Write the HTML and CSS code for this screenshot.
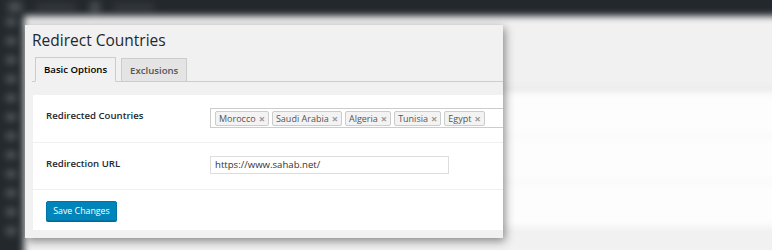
FILE: index.html
```html
<!DOCTYPE html>
<html lang="en">
<head>
  <meta charset="UTF-8" />
  <title>Redirect Countries</title>
  <link rel="stylesheet" href="styles.css">
</head>
<body>
  <div class="screen">
    <!-- blurred wp-admin behind the settings card -->
    <div class="backdrop">
      <div class="adminbar">
        <span class="ab-icon"></span>
        <span class="ab-item"></span>
        <span class="ab-icon small"></span>
        <span class="ab-item"></span>
      </div>
      <div class="wp-body">
        <div class="menu">
          <span></span><span></span><span></span><span></span><span></span>
          <span></span><span></span><span></span><span></span><span></span>
          <span></span><span></span>
        </div>
        <div class="content">
          <div class="ghost-head"></div>
          <div class="ghost-panel">
            <div class="ghost-row"></div>
            <div class="ghost-row"></div>
            <div class="ghost-row"></div>
          </div>
        </div>
      </div>
    </div>

    <div class="card">
      <h1 class="page-title">Redirect Countries</h1>
      <div class="nav-tabs">
        <a href="#" class="nav-tab active">Basic Options</a>
        <a href="#" class="nav-tab">Exclusions</a>
      </div>

      <div class="panel">
        <div class="form-row">
          <div class="label">Redirected Countries</div>
          <div class="field">
            <div class="tag-box">
              <span class="tag">Morocco <b>×</b></span>
              <span class="tag">Saudi Arabia <b>×</b></span>
              <span class="tag">Algeria <b>×</b></span>
              <span class="tag">Tunisia <b>×</b></span>
              <span class="tag">Egypt <b>×</b></span>
            </div>
          </div>
        </div>
        <div class="form-row">
          <div class="label">Redirection URL</div>
          <div class="field">
            <div class="text-input">https://www.sahab.net/</div>
          </div>
        </div>
        <div class="form-row submit-row">
          <button class="btn-primary">Save Changes</button>
        </div>
      </div>
    </div>
  </div>
</body>
</html>
```

FILE: styles.css
```css
:root {
  --dark: #23282d;
  --bg: #f1f1f1;
  --line: #dcdcdc;
  --text: #333;
  --blue: #0085ba;
}

* {
  box-sizing: border-box;
}

body {
  margin: 0;
  background: var(--bg);
  font-family: 'Open Sans', 'Noto Sans', sans-serif;
  color: var(--text);
}

.screen {
  position: relative;
  width: 772px;
  height: 250px;
  overflow: hidden;
  background: var(--bg);
}

/* background admin screen, out of focus */
.backdrop {
  position: absolute;
  top: -10px;
  left: -10px;
  right: -10px;
  bottom: -10px;
  display: flex;
  flex-direction: column;
  filter: blur(3.5px);
}

.adminbar {
  height: 26px;
  background: var(--dark);
  display: flex;
  align-items: center;
  gap: 14px;
  padding: 8px 0 0 18px;
}

.ab-icon {
  width: 14px;
  height: 10px;
  background: #4a5055;
}

.ab-icon.small {
  width: 10px;
}

.ab-item {
  width: 40px;
  height: 6px;
  background: #353b40;
}

.wp-body {
  flex: 1;
  display: flex;
}

.menu {
  width: 34px;
  background: var(--dark);
  display: flex;
  flex-direction: column;
  gap: 11px;
  padding: 2px 0 0 16px;
}

.menu span {
  width: 10px;
  height: 8px;
  background: #50565b;
}

.content {
  flex: 1;
  display: flex;
  flex-direction: column;
  padding-left: 6px;
}

.ghost-head {
  height: 76px;
  border-bottom: 4px solid #e6e6e6;
}

.ghost-panel {
  height: 136px;
  background: #fdfdfd;
  display: flex;
  flex-direction: column;
}

.ghost-row {
  flex: 1;
  border-bottom: 2px solid #f3f3f3;
}

/* settings card */
.card {
  position: absolute;
  top: 25px;
  left: 25px;
  width: 478px;
  height: 213px;
  background: var(--bg);
  overflow: hidden;
  padding: 5px 0 0 7px;
  box-shadow: 2px 3px 9px rgba(0, 0, 0, 0.45);
}

.page-title {
  margin: 0;
  font-size: 15.5px;
  font-weight: 400;
  line-height: 20px;
  color: #23282d;
}

.nav-tabs {
  display: flex;
  gap: 5px;
  margin-top: 7px;
  padding-left: 3px;
  border-bottom: 1px solid #ccc;
  height: 25px;
  align-items: flex-end;
}

.nav-tab {
  display: block;
  height: 24px;
  margin-bottom: -1px;
  padding: 0 8px;
  font-size: 9.6px;
  font-weight: 600;
  line-height: 23px;
  text-decoration: none;
  color: #555;
  background: #e4e4e4;
  border: 1px solid #ccc;
}

.nav-tab.active {
  height: 25px;
  color: #000;
  background: var(--bg);
  border-bottom-color: var(--bg);
}

.panel {
  margin: 13px 0 0 1px;
  width: 480px;
  background: #fff;
  height: 135px;
}

.form-row {
  display: flex;
  align-items: center;
  height: 48px;
  padding-left: 13px;
  border-bottom: 1px solid #f0f0f0;
}

.form-row + .form-row {
  height: 47px;
}

.label {
  flex-shrink: 0;
  width: 164px;
  font-size: 9.6px;
  font-weight: 600;
  color: #23282d;
  margin-top: -6px;
}

.field {
  flex: 1;
  margin-top: -2px;
}

.tag-box {
  display: flex;
  gap: 3px;
  width: 320px;
  height: 20px;
  padding: 2px 4px;
  border: 1px solid #ccc;
  background: #fff;
}

.tag {
  display: flex;
  align-items: center;
  gap: 3px;
  height: 15px;
  padding: 0 3px;
  font-size: 9px;
  color: #555;
  background: #f3f3f3;
  border: 1px solid #ccc;
  border-radius: 2px;
  white-space: nowrap;
}

.tag b {
  color: #999;
  font-size: 11px;
}

.text-input {
  width: 239px;
  height: 18px;
  padding: 0 4px;
  font-size: 9.6px;
  line-height: 16px;
  color: #333;
  border: 1px solid #ddd;
}

.submit-row {
  height: 40px;
  border-bottom: none;
  padding-bottom: 5px;
}

.btn-primary {
  height: 20px;
  width: 71px;
  padding: 0;
  font-family: inherit;
  font-size: 8.8px;
  color: #fff;
  background: var(--blue);
  border: 1px solid #0073aa;
  border-radius: 2px;
  box-shadow: 0 1px 0 #006799;
}
```
